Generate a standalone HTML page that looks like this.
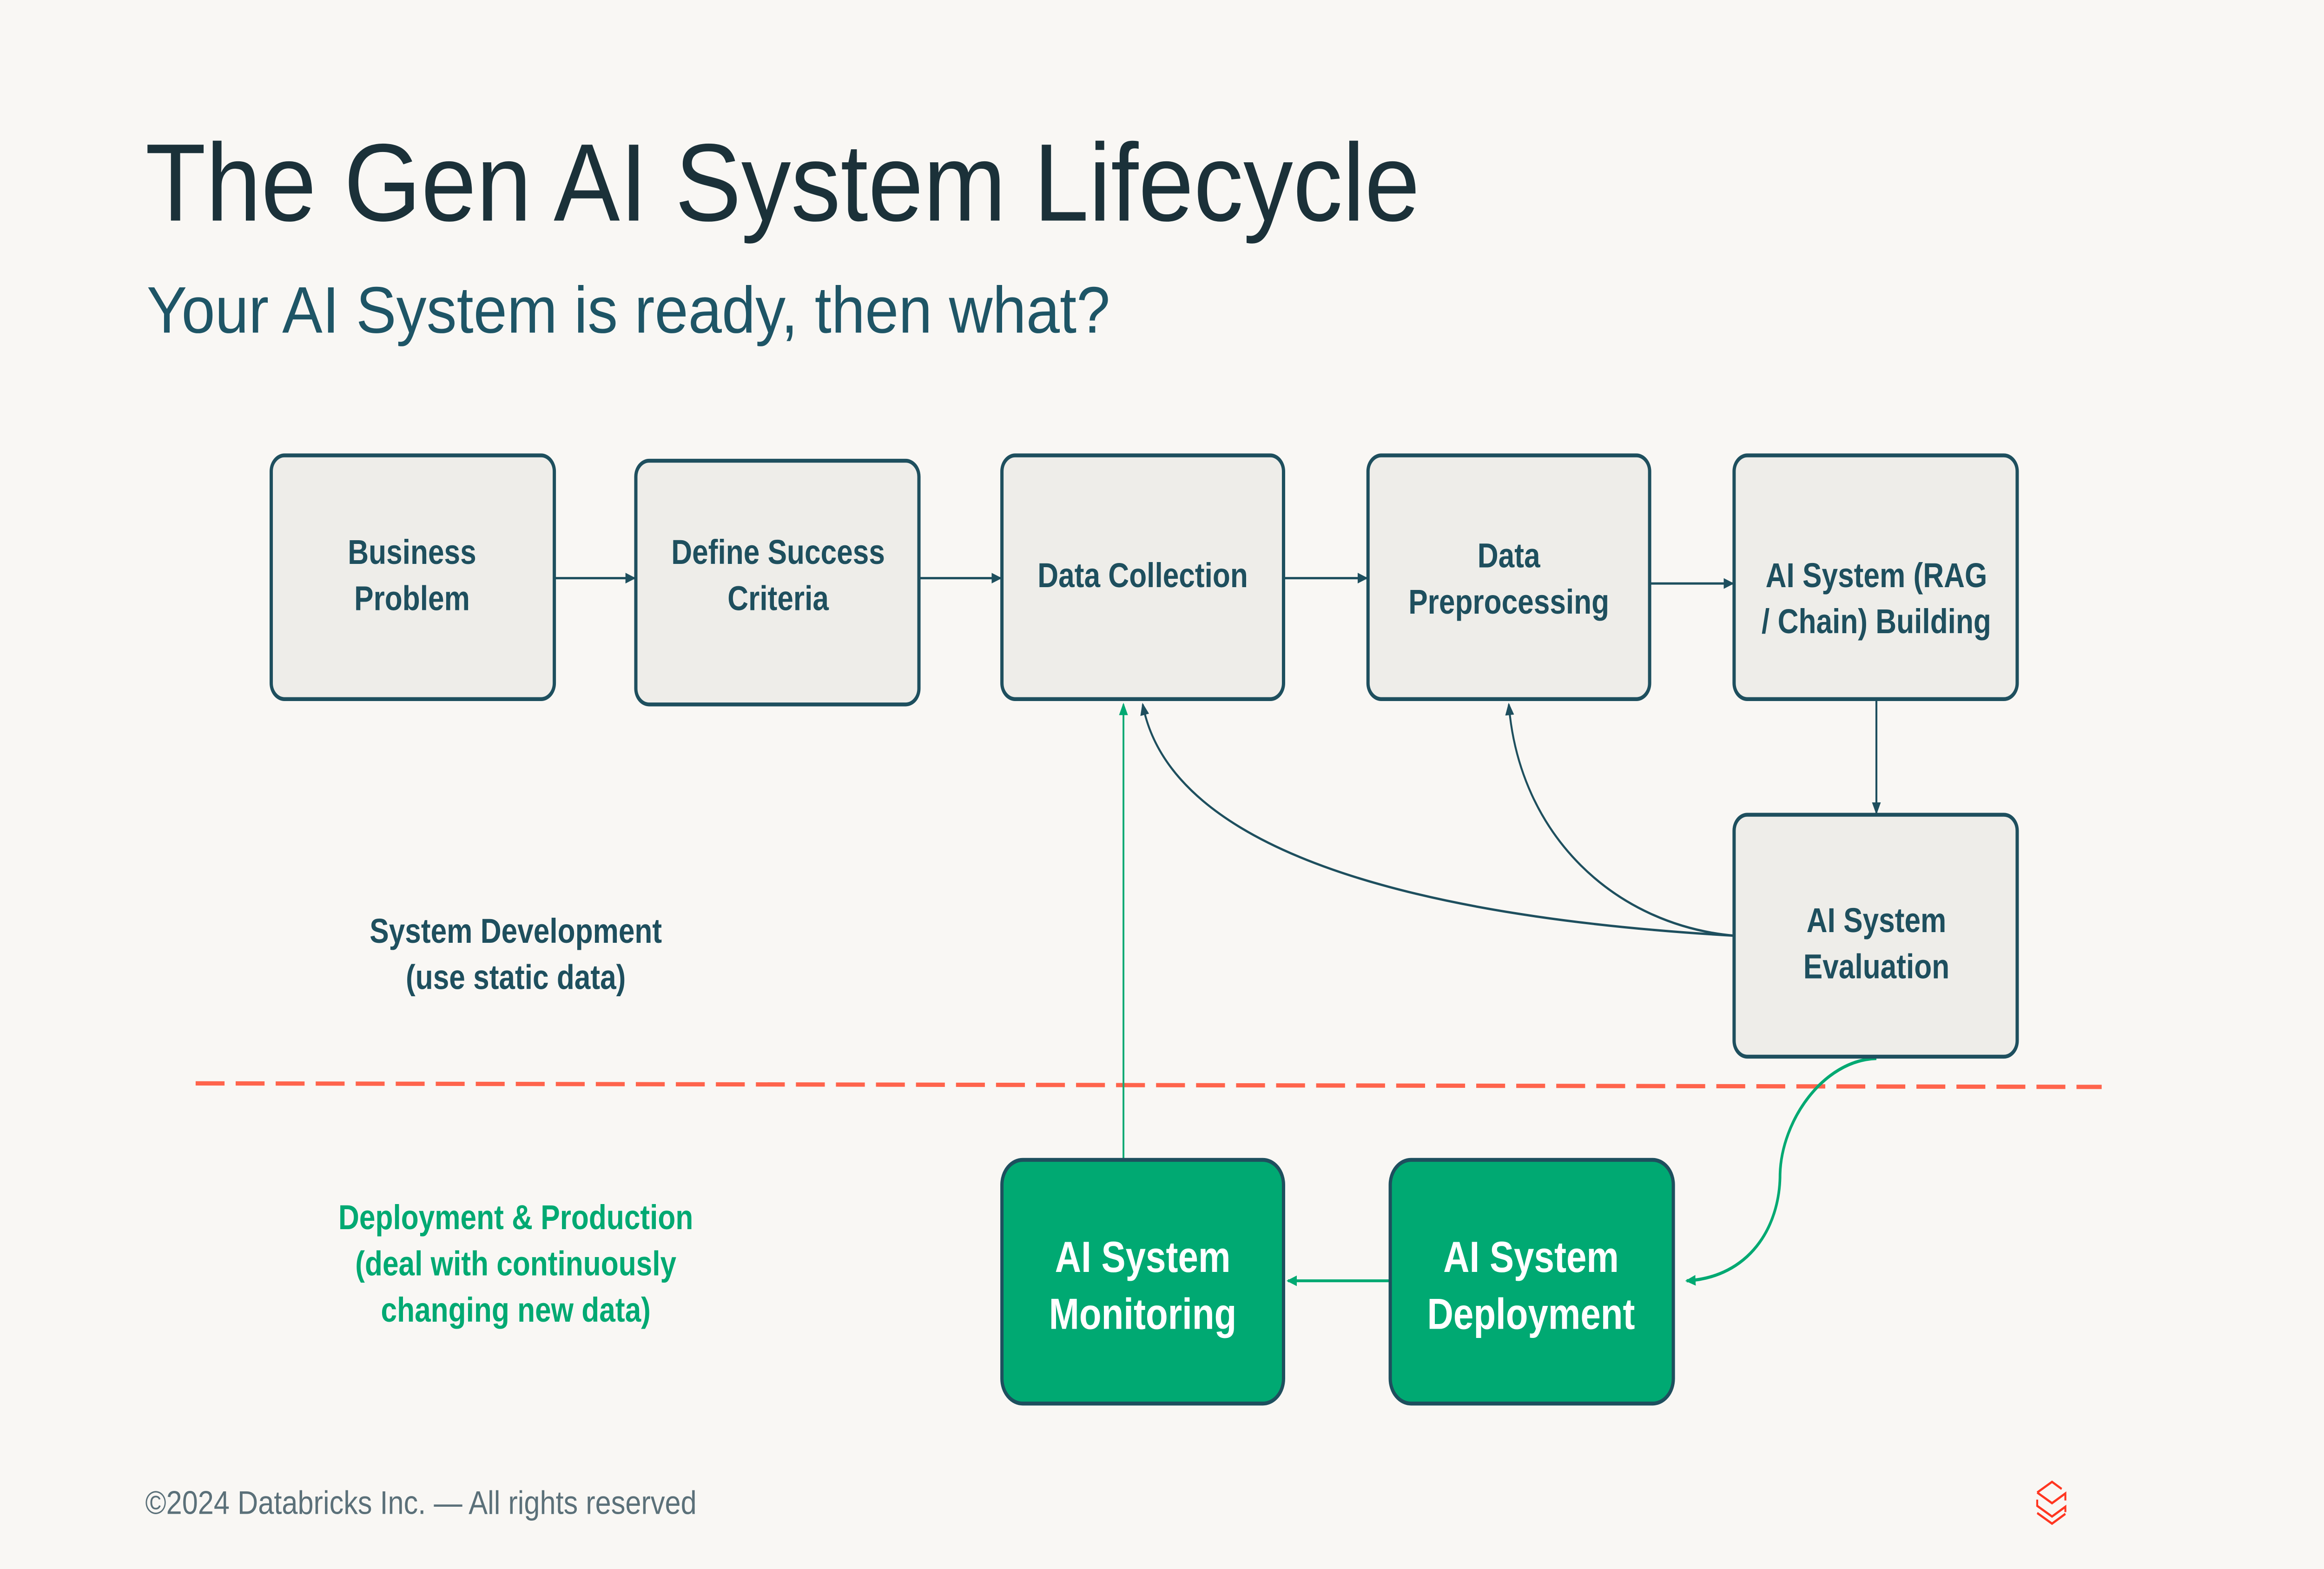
<!DOCTYPE html>
<html><head><meta charset="utf-8">
<style>
html,body{margin:0;padding:0;background:#F9F7F4;width:100%;height:100%;overflow:hidden;}
svg{display:block;width:100vw;height:100vh;}
text{font-family:"Liberation Sans",sans-serif;}
</style></head>
<body>
<svg viewBox="0 0 1568 882" preserveAspectRatio="none" xmlns="http://www.w3.org/2000/svg">
<defs>
<marker id="ad" markerWidth="8" markerHeight="8" refX="6" refY="4" orient="auto" markerUnits="userSpaceOnUse"><path d="M0,1 L7,4 L0,7 Z" fill="#1E4F5E"/></marker>
<marker id="ag" markerWidth="8" markerHeight="8" refX="6" refY="4" orient="auto" markerUnits="userSpaceOnUse"><path d="M0,1 L7,4 L0,7 Z" fill="#00A972"/></marker>
</defs>
<rect width="1568" height="882" fill="#F9F7F4"/>

<text x="98" y="124" font-size="62" fill="#1B3139" textLength="860" lengthAdjust="spacingAndGlyphs">The Gen AI System Lifecycle</text>
<text x="99" y="187" font-size="37" fill="#1E5566" textLength="650" lengthAdjust="spacingAndGlyphs">Your AI System is ready, then what?</text>

<line x1="132" y1="609" x2="1418" y2="611" stroke="#FF644C" stroke-width="2.4" stroke-dasharray="19.5 7.5"/>

<g fill="none" stroke="#1E4F5E" stroke-width="1.3">
<line x1="375" y1="325" x2="428" y2="325" marker-end="url(#ad)"/>
<line x1="621" y1="325" x2="675" y2="325" marker-end="url(#ad)"/>
<line x1="867" y1="325" x2="922" y2="325" marker-end="url(#ad)"/>
<line x1="1114" y1="328" x2="1169" y2="328" marker-end="url(#ad)"/>
<line x1="1266" y1="394" x2="1266" y2="457" marker-end="url(#ad)"/>
<path d="M1170,526 C960,516 790,480 771,396" marker-end="url(#ad)"/>
<path d="M1170,526 C1090,520 1025,470 1018,396" marker-end="url(#ad)"/>
</g>
<g fill="none" stroke="#00A972">
<line x1="758" y1="651" x2="758" y2="396" stroke-width="1.2" marker-end="url(#ag)"/>
<line x1="937" y1="720" x2="869" y2="720" stroke-width="1.6" marker-end="url(#ag)"/>
<path d="M1266,595 C1230,596 1202,630 1201,660 C1201,690 1180,718 1138,720" stroke-width="1.8" marker-end="url(#ag)"/>
</g>

<g stroke="#1E4F5E" stroke-width="2.2" fill="#EEEDE9">
<rect x="183" y="256" width="191" height="137" rx="9"/>
<rect x="429" y="259" width="191" height="137" rx="9"/>
<rect x="676" y="256" width="190" height="137" rx="9"/>
<rect x="923" y="256" width="190" height="137" rx="9"/>
<rect x="1170" y="256" width="191" height="137" rx="9"/>
<rect x="1170" y="458" width="191" height="136" rx="9"/>
<rect x="676" y="652" width="190" height="137" rx="14" fill="#00A972"/>
<rect x="938" y="652" width="191" height="137" rx="14" fill="#00A972"/>
</g>

<g font-size="19.5" font-weight="bold" fill="#1E4F5E" text-anchor="middle">
<text x="278" y="317">Business</text>
<text x="278" y="343">Problem</text>
<text x="525" y="317">Define Success</text>
<text x="525" y="343">Criteria</text>
<text x="771" y="330">Data Collection</text>
<text x="1018" y="319">Data</text>
<text x="1018" y="345">Preprocessing</text>
<text x="1266" y="330">AI System (RAG</text>
<text x="1266" y="356">/ Chain) Building</text>
<text x="1266" y="524">AI System</text>
<text x="1266" y="550">Evaluation</text>
<text x="348" y="530">System Development</text>
<text x="348" y="556">(use static data)</text>
</g>
<g font-size="19.5" font-weight="bold" fill="#00A972" text-anchor="middle">
<text x="348" y="691">Deployment &amp; Production</text>
<text x="348" y="717">(deal with continuously</text>
<text x="348" y="743">changing new data)</text>
</g>
<g font-size="24.5" font-weight="bold" fill="#FFFFFF" text-anchor="middle">
<text x="771" y="715">AI System</text>
<text x="771" y="747">Monitoring</text>
<text x="1033" y="715">AI System</text>
<text x="1033" y="747">Deployment</text>
</g>

<text x="98" y="851" font-size="18.5" fill="#5B7079" textLength="372" lengthAdjust="spacingAndGlyphs">©2024 Databricks Inc. — All rights reserved</text>

<g fill="none" stroke="#FF3621" stroke-width="1.3">
<path d="M1374.5,839 L1384.5,833 L1391,837"/>
<path d="M1374.5,839 L1384.5,845 L1393.5,839.5 L1393.5,843.5"/>
<path d="M1374.5,843 L1374.5,846.5 L1384.5,852.5 L1393.5,847 L1393.5,850"/>
<path d="M1374.5,850.5 L1384.5,856.5 L1393.5,851"/>
</g>
</svg>
</body></html>
